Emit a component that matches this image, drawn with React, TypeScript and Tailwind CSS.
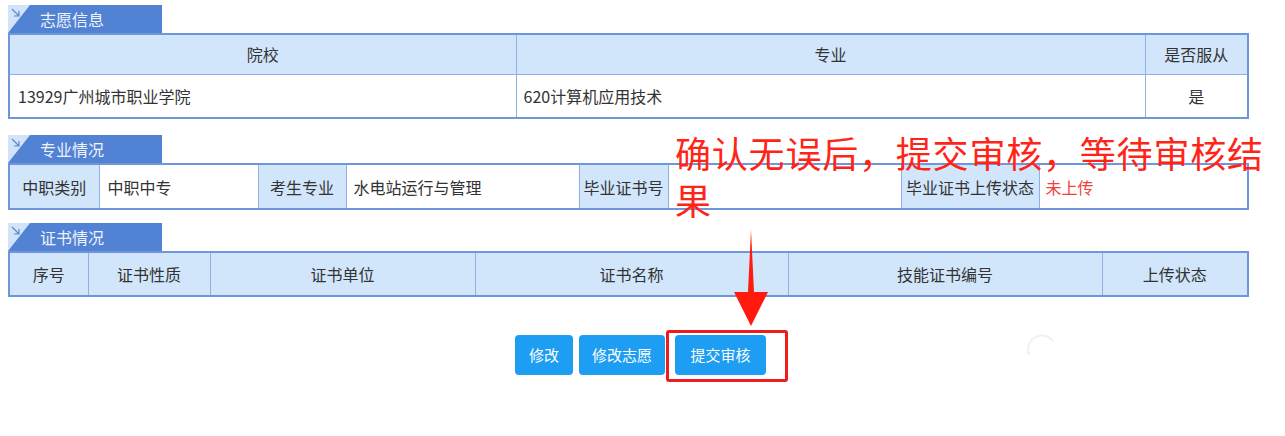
import React from "react";

const font = { fontFamily: '"Noto Sans CJK SC", "Microsoft YaHei", sans-serif' };

function Tab({ title }: { title: string }) {
  return (
    <div className="relative w-[154px] h-[28px] bg-[#d3e3f8]">
      <svg className="absolute left-[2px] top-[2px]" width="12" height="12" viewBox="0 0 12 12">
        <path d="M2 2 L9 9 M9 4 L9 9 L4 9" stroke="#5b86cf" strokeWidth="1.2" fill="none" />
      </svg>
      <div className="absolute inset-0 bg-[#5282d3] [clip-path:polygon(22px_0,100%_0,100%_100%,0_100%)]" />
      <div className="relative pl-[32px] leading-[28px] text-[16px] text-[#eef3fb]">{title}</div>
    </div>
  );
}

const th = "border border-[#8eb0e6] bg-[#d2e6fb] font-normal text-[#333] text-[16px]";
const td = "border border-[#8eb0e6] bg-white text-[#333] text-[16px]";
const btn = "h-[40px] rounded-[4px] bg-[#1d9ef2] text-white text-[15px]";

export default function App() {
  return (
    <div className="relative w-[1285px] h-[436px] bg-white overflow-hidden" style={font}>
      <div className="pl-[8px] pt-[5px] w-[1249px]">
        {/* 志愿信息 */}
        <Tab title="志愿信息" />
        <table className="w-full border-collapse border-2 border-[#6e96da] table-fixed">
          <colgroup>
            <col className="w-[507px]" />
            <col className="w-[629px]" />
            <col />
          </colgroup>
          <tbody>
            <tr className="h-[40px]">
              <th className={th}>院校</th>
              <th className={th}>专业</th>
              <th className={th}>是否服从</th>
            </tr>
            <tr className="h-[44px]">
              <td className={`${td} pl-[8px]`}>13929广州城市职业学院</td>
              <td className={`${td} pl-[7px]`}>620计算机应用技术</td>
              <td className={`${td} text-center`}>是</td>
            </tr>
          </tbody>
        </table>

        {/* 专业情况 */}
        <div className="mt-[16px]">
          <Tab title="专业情况" />
        </div>
        <table className="w-full border-collapse border-2 border-[#6e96da] table-fixed">
          <colgroup>
            <col className="w-[90px]" />
            <col className="w-[159px]" />
            <col className="w-[88px]" />
            <col className="w-[233px]" />
            <col className="w-[89px]" />
            <col className="w-[233px]" />
            <col className="w-[138px]" />
            <col />
          </colgroup>
          <tbody>
            <tr className="h-[45px]">
              <td className={`${th} text-center`}>中职类别</td>
              <td className={`${td} pl-[8px]`}>中职中专</td>
              <td className={`${th} text-center`}>考生专业</td>
              <td className={`${td} pl-[7px]`}>水电站运行与管理</td>
              <td className={`${th} text-center`}>毕业证书号</td>
              <td className={td}></td>
              <td className={`${th} text-center whitespace-nowrap text-[15px]`}>毕业证书上传状态</td>
              <td className={`${td} pl-[6px] text-[#f0403a] text-[15px]`}>未上传</td>
            </tr>
          </tbody>
        </table>

        {/* 证书情况 */}
        <div className="mt-[13px]">
          <Tab title="证书情况" />
        </div>
        <table className="w-full border-collapse border-2 border-[#6e96da] table-fixed">
          <colgroup>
            <col className="w-[79px]" />
            <col className="w-[122px]" />
            <col className="w-[265px]" />
            <col className="w-[313px]" />
            <col className="w-[314px]" />
            <col />
          </colgroup>
          <tbody>
            <tr className="h-[44px]">
              <th className={th}>序号</th>
              <th className={th}>证书性质</th>
              <th className={th}>证书单位</th>
              <th className={th}>证书名称</th>
              <th className={th}>技能证书编号</th>
              <th className={th}>上传状态</th>
            </tr>
          </tbody>
        </table>
      </div>

      {/* 按钮 */}
      <div className="mt-[38px] flex justify-center pr-[4px]">
        <button className={`${btn} w-[58px]`}>修改</button>
        <button className={`${btn} ml-[6px] w-[86px]`}>修改志愿</button>
        <button className={`${btn} ml-[10px] w-[91px]`}>提交审核</button>
      </div>

      {/* 标注 */}
      <div className="absolute left-[675px] top-[129px] w-[610px] text-[36px] leading-[47px] tracking-[0.8px] text-[#ff2418]">
        确认无误后，提交审核，等待审核结果
      </div>
      <svg className="absolute left-[728px] top-[230px]" width="46" height="100" viewBox="0 0 46 100">
        <path d="M23 0 L26 62 L40 62 L23 96 L6 62 L20 62 Z" fill="#ff1a0d" />
      </svg>
      <div className="absolute left-[666px] top-[330px] w-[122px] h-[52px] border-[3px] border-[#ee1c1c] rounded-[3px]" />

      {/* 加载残影 */}
      <svg className="absolute left-[1025px] top-[333px]" width="36" height="30" viewBox="0 0 36 30">
        <path d="M4 22 A14 14 0 0 1 28 8" stroke="#f1f1f1" strokeWidth="2" fill="none" />
      </svg>
    </div>
  );
}
